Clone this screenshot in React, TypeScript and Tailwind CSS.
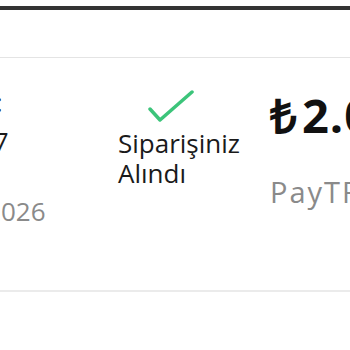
export default function App() {
  return (
    <div className="w-[350px] h-[350px] bg-white overflow-hidden font-['Open_Sans',sans-serif]">
      <div className="h-[6px]" />
      <div className="h-[4px] bg-[#333]" />
      <div className="h-[48px] border-b border-[#e4e4e4]" />
      <div className="h-[234px] border-b-2 border-[#ebebeb] flex items-start -ml-[127px]">
        {/* order info */}
        <div className="w-[245px] shrink-0 pt-[30px] text-[26px] leading-[28px] text-[#1a1a1a] whitespace-nowrap">
          <p>Sipariş No:</p>
          <p className="mt-[11px]">#10052477</p>
          <p className="mt-[42px] text-[#8a8a8a]">12 Şubat 2026</p>
        </div>

        {/* status */}
        <div className="w-[151px] shrink-0 pt-[32px]">
          <svg width="46" height="32" viewBox="0 0 46 32" className="ml-[30px]" fill="none">
            <path d="M2 19 L12 30 L44 2" stroke="#3cc47a" strokeWidth="3.5" strokeLinecap="round" strokeLinejoin="round" />
          </svg>
          <p className="mt-[6px] text-[26px] leading-[30px] text-[#1a1a1a]">
            Siparişiniz
            <br />
            Alındı
          </p>
        </div>

        {/* amount */}
        <div className="shrink-0 pt-[34px] pl-[1px] whitespace-nowrap">
          <p className="text-[47px] leading-[47px] font-bold tracking-[1px] text-[#111]">
            <span className="mr-[4px]">₺</span>2.049,90
          </p>
          <p className="mt-[38px] text-[29px] leading-[29px] tracking-[2px] text-[#8a8a8a]">PayTR</p>
        </div>
      </div>
    </div>
  )
}
